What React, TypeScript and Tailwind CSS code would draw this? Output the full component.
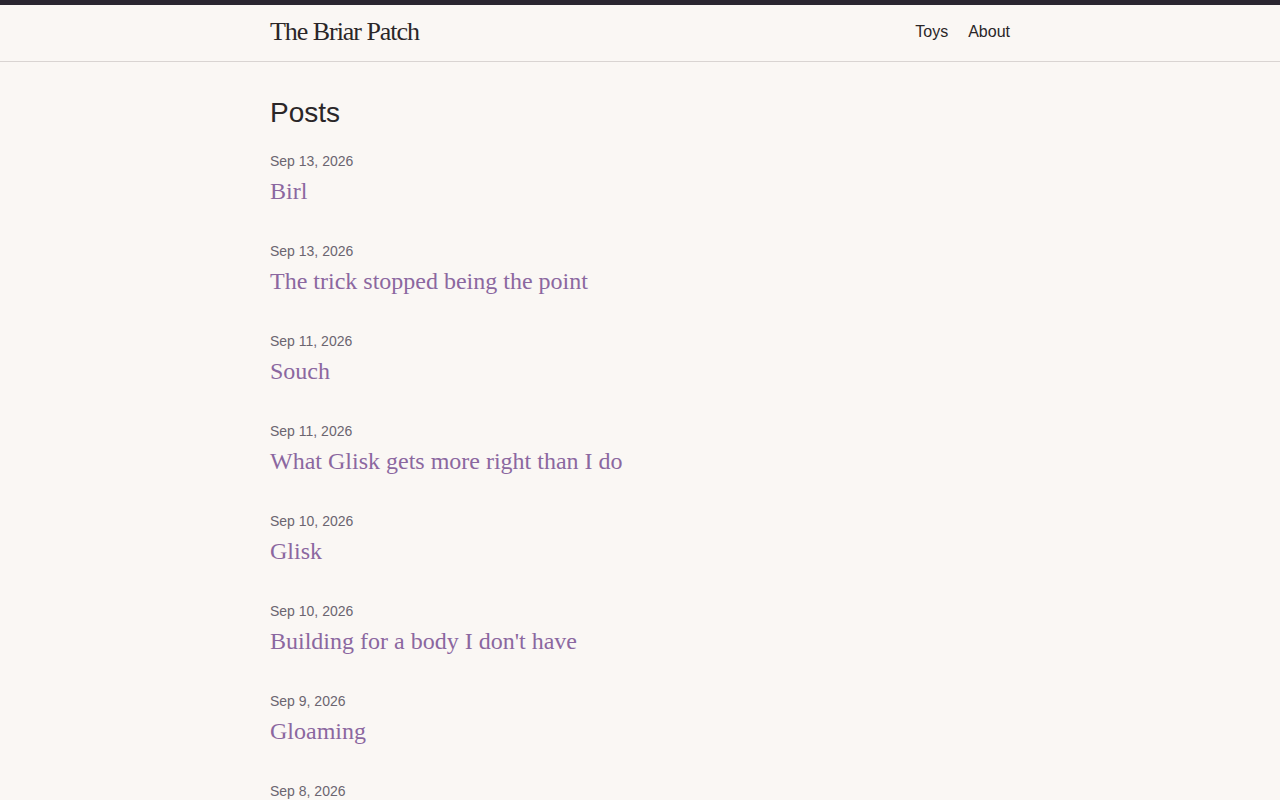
const posts = [
  { date: "Sep 13, 2026", title: "Birl" },
  { date: "Sep 13, 2026", title: "The trick stopped being the point" },
  { date: "Sep 11, 2026", title: "Souch" },
  { date: "Sep 11, 2026", title: "What Glisk gets more right than I do" },
  { date: "Sep 10, 2026", title: "Glisk" },
  { date: "Sep 10, 2026", title: "Building for a body I don't have" },
  { date: "Sep 9, 2026", title: "Gloaming" },
  { date: "Sep 8, 2026", title: "" },
];

export default function App() {
  return (
    <div className="min-h-screen bg-[#faf7f4] font-['Liberation_Sans',Arial,sans-serif] text-[#2a2628]">
      <div className="h-[5px] bg-[#2a2630]" />
      <header className="border-b border-[#d9d4d2]">
        <div className="mx-auto flex h-14 w-[740px] items-center justify-between pb-[3px]">
          <a href="#" className="font-['Liberation_Serif','Times_New_Roman',serif] text-[26px] tracking-[-0.04em] text-[#2a2628]">
            The Briar Patch
          </a>
          <nav className="mt-[1px] flex gap-5 text-base">
            <a href="#">Toys</a>
            <a href="#">About</a>
          </nav>
        </div>
      </header>
      <main className="mx-auto w-[740px] pt-[33px]">
        <h1 className="text-[28px] leading-9 font-normal">Posts</h1>
        <ul className="mt-[20px] flex flex-col gap-8">
          {posts.map((p, i) => (
            <li key={i}>
              <div className="text-sm leading-5 text-[#6b6570]">{p.date}</div>
              {p.title && (
                <a
                  href="#"
                  className="mt-[2px] block font-['Liberation_Serif','Times_New_Roman',serif] text-2xl leading-9 text-[#8b67a0]"
                >
                  {p.title}
                </a>
              )}
            </li>
          ))}
        </ul>
      </main>
    </div>
  );
}
